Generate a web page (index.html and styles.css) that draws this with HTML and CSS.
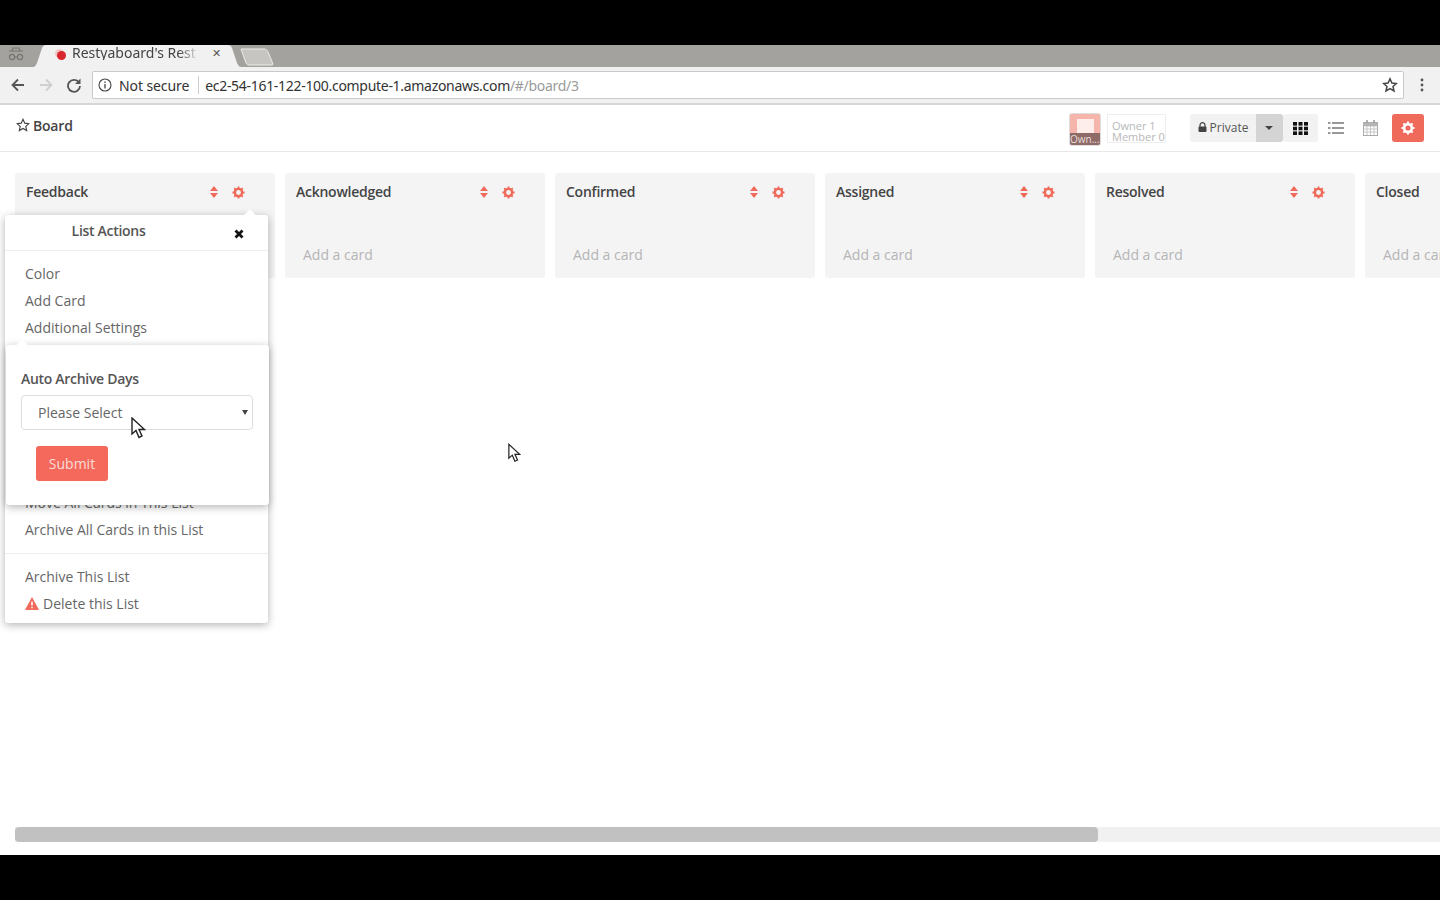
FILE: index.html
```html
<!DOCTYPE html>
<html>
<head>
  <meta charset="UTF-8">
  <title>Restyaboard</title>
  <link rel="stylesheet" href="styles.css">
</head>
<body>
  <div class="black-bar"></div>

  <!-- browser tabs -->
  <div class="tabstrip">
    <svg class="incognito" width="18" height="16" viewBox="0 0 18 16"><path d="M2 4h14M5 4l1-3h6l1 3" fill="none" stroke="#77756f" stroke-width="1.2"/><circle cx="5" cy="10" r="2.6" fill="none" stroke="#77756f" stroke-width="1.2"/><circle cx="13" cy="10" r="2.6" fill="none" stroke="#77756f" stroke-width="1.2"/><path d="M7.6 10h2.8" stroke="#77756f"/></svg>
    <div class="tab">
      <svg class="tab-shape" width="208" height="22" viewBox="0 0 208 22"><path d="M0 22C2 22 3 20 4 18L9 3C10 1 11 0 13 0H195C197 0 198 1 199 3L204 18C205 20 206 22 208 22Z" fill="#f1f1f1"/></svg>
      <span class="favicon"></span>
      <span class="tab-title">Restyaboard's Rest</span>
      <span class="tab-close">✕</span>
    </div>
    <svg class="new-tab" width="36" height="18" viewBox="0 0 36 18"><path d="M1 1H24C26 1 27 2 28 4L33 16C33 17 32 17 31 17H9C7 17 7 16 6 15L1 1Z" fill="#c6c5c1" stroke="#eeeeec"/></svg>
  </div>

  <!-- browser toolbar -->
  <div class="toolbar">
    <svg class="nav-icon" width="16" height="16" viewBox="0 0 16 16"><path d="M14 8H3M8 2.5L2.5 8 8 13.5" fill="none" stroke="#555" stroke-width="1.8"/></svg>
    <svg class="nav-icon" width="16" height="16" viewBox="0 0 16 16"><path d="M2 8h11M8 2.5L13.5 8 8 13.5" fill="none" stroke="#cfcfcf" stroke-width="1.8"/></svg>
    <svg class="nav-icon" width="16" height="16" viewBox="0 0 16 16"><path d="M13 5.5A6 6 0 1 0 14 9" fill="none" stroke="#555" stroke-width="1.8"/><path d="M14.5 1.5V7H9z" fill="#555"/></svg>
    <div class="omnibox">
      <svg width="14" height="14" viewBox="0 0 14 14"><circle cx="7" cy="7" r="6" fill="none" stroke="#444" stroke-width="1.1"/><path d="M7 6v4.400M7 3.500v1.400" stroke="#444" stroke-width="1.3"/></svg>
      <span class="secure">Not secure</span>
      <span class="omni-sep"></span>
      <span class="url">ec2-54-161-122-100.compute-1.amazonaws.com<span class="url-path">/#/board/3</span></span>
      <svg class="omni-star" width="16" height="16" viewBox="0 0 16 16"><path d="M8 1.800l1.900 4.200 4.500.5-3.400 3 1 4.500L8 11.700 4 14l1-4.500-3.400-3 4.500-.5z" fill="none" stroke="#444" stroke-width="1.500"/></svg>
    </div>
    <svg class="menu-dots" width="4" height="14" viewBox="0 0 4 14"><circle cx="2" cy="2" r="1.400" fill="#555"/><circle cx="2" cy="7" r="1.400" fill="#555"/><circle cx="2" cy="12" r="1.400" fill="#555"/></svg>
  </div>

  <div class="page">
    <div class="board-header">
      <div class="board-name">
        <svg width="14" height="14" viewBox="0 0 16 16"><path d="M8 1.500l2 4.400 4.700.5-3.500 3.200 1 4.700L8 11.900l-4.200 2.400 1-4.700L1.300 6.400 6 5.900z" fill="none" stroke="#444" stroke-width="1.300"/></svg>
        <span>Board</span>
      </div>
      <div class="board-tools">
        <div class="avatar"><span class="avatar-label">Own...</span></div>
        <div class="counts"><span>Owner 1</span><span>Member 0</span></div>
        <div class="privacy">
          <span class="privacy-label">
            <svg width="9" height="10" viewBox="0 0 9 10"><path d="M2 5V3.200a2.500 2.500 0 0 1 5 0V5" fill="none" stroke="#444" stroke-width="1.200"/><rect x="0.500" y="4.500" width="8" height="5.500" rx="1" fill="#444"/></svg>
            Private
          </span>
          <span class="privacy-caret"></span>
        </div>
        <div class="view-btn view-btn-active">
          <svg width="15" height="13" viewBox="0 0 15 13" fill="#111"><rect width="4" height="3.600"/><rect x="5.500" width="4" height="3.600"/><rect x="11" width="4" height="3.600"/><rect y="4.700" width="4" height="3.600"/><rect x="5.500" y="4.700" width="4" height="3.600"/><rect x="11" y="4.700" width="4" height="3.600"/><rect y="9.400" width="4" height="3.600"/><rect x="5.500" y="9.400" width="4" height="3.600"/><rect x="11" y="9.400" width="4" height="3.600"/></svg>
        </div>
        <div class="view-btn">
          <svg width="16" height="12" viewBox="0 0 16 12" fill="#999"><rect width="2.500" height="2"/><rect x="4" width="12" height="2"/><rect y="5" width="2.500" height="2"/><rect x="4" y="5" width="12" height="2"/><rect y="10" width="2.500" height="2"/><rect x="4" y="10" width="12" height="2"/></svg>
        </div>
        <div class="view-btn">
          <svg width="15" height="16" viewBox="0 0 15 16"><rect x="0.500" y="2.500" width="14" height="13" fill="none" stroke="#aaa"/><path d="M0.500 6h14M0.500 9h14M0.500 12h14M4 6v9M7.500 6v9M11 6v9" stroke="#bbb" stroke-width="0.800"/><path d="M0.500 2.500h14V6H.5z" fill="#b5b5b5"/><path d="M4 0v3M11 0v3" stroke="#999" stroke-width="1.500"/></svg>
        </div>
        <div class="settings-btn">
          <svg class="gear" width="14" height="14" viewBox="0 0 14 14"><circle cx="7" cy="7" r="3.900" fill="none" stroke="#fff" stroke-width="2.600"/><path d="M7 0.500v2.500M7 11v2.500M0.500 7H3M11 7h2.500M2.400 2.400l1.800 1.800M9.800 9.800l1.800 1.800M2.400 11.600l1.800-1.800M9.800 4.200l1.800-1.800" stroke="#fff" stroke-width="2"/></svg>
        </div>
      </div>
    </div>

    <div class="lists">
      <div class="list">
        <div class="list-head"><span class="list-title">Feedback</span><span class="sort-icon"></span><svg class="gear" width="13" height="13" viewBox="0 0 14 14"><circle cx="7" cy="7" r="3.900" fill="none" stroke="#ef6a5a" stroke-width="2.600"/><path d="M7 0.500v2.500M7 11v2.500M0.500 7H3M11 7h2.500M2.400 2.400l1.800 1.800M9.800 9.800l1.800 1.800M2.400 11.600l1.800-1.800M9.800 4.200l1.800-1.800" stroke="#ef6a5a" stroke-width="2"/></svg></div>
        <div class="add-card">Add a card</div>
      </div>
      <div class="list">
        <div class="list-head"><span class="list-title">Acknowledged</span><span class="sort-icon"></span><svg class="gear" width="13" height="13" viewBox="0 0 14 14"><circle cx="7" cy="7" r="3.900" fill="none" stroke="#ef6a5a" stroke-width="2.600"/><path d="M7 0.500v2.500M7 11v2.500M0.500 7H3M11 7h2.500M2.400 2.400l1.800 1.800M9.800 9.800l1.800 1.800M2.400 11.600l1.800-1.800M9.800 4.200l1.800-1.800" stroke="#ef6a5a" stroke-width="2"/></svg></div>
        <div class="add-card">Add a card</div>
      </div>
      <div class="list">
        <div class="list-head"><span class="list-title">Confirmed</span><span class="sort-icon"></span><svg class="gear" width="13" height="13" viewBox="0 0 14 14"><circle cx="7" cy="7" r="3.900" fill="none" stroke="#ef6a5a" stroke-width="2.600"/><path d="M7 0.500v2.500M7 11v2.500M0.500 7H3M11 7h2.500M2.400 2.400l1.800 1.800M9.800 9.800l1.800 1.800M2.400 11.600l1.800-1.800M9.800 4.200l1.800-1.800" stroke="#ef6a5a" stroke-width="2"/></svg></div>
        <div class="add-card">Add a card</div>
      </div>
      <div class="list">
        <div class="list-head"><span class="list-title">Assigned</span><span class="sort-icon"></span><svg class="gear" width="13" height="13" viewBox="0 0 14 14"><circle cx="7" cy="7" r="3.900" fill="none" stroke="#ef6a5a" stroke-width="2.600"/><path d="M7 0.500v2.500M7 11v2.500M0.500 7H3M11 7h2.500M2.400 2.400l1.800 1.800M9.800 9.800l1.800 1.800M2.400 11.600l1.800-1.800M9.800 4.200l1.800-1.800" stroke="#ef6a5a" stroke-width="2"/></svg></div>
        <div class="add-card">Add a card</div>
      </div>
      <div class="list">
        <div class="list-head"><span class="list-title">Resolved</span><span class="sort-icon"></span><svg class="gear" width="13" height="13" viewBox="0 0 14 14"><circle cx="7" cy="7" r="3.900" fill="none" stroke="#ef6a5a" stroke-width="2.600"/><path d="M7 0.500v2.500M7 11v2.500M0.500 7H3M11 7h2.500M2.400 2.400l1.800 1.800M9.800 9.800l1.800 1.800M2.400 11.600l1.800-1.800M9.800 4.200l1.800-1.800" stroke="#ef6a5a" stroke-width="2"/></svg></div>
        <div class="add-card">Add a card</div>
      </div>
      <div class="list">
        <div class="list-head"><span class="list-title">Closed</span></div>
        <div class="add-card">Add a card</div>
      </div>
    </div>

    <div class="scrollbar"><div class="scroll-thumb"></div></div>
  </div>

  <div class="black-bar-bottom"></div>

  <!-- list actions dropdown -->
  <div class="popup actions-popup">
    <div class="popup-head">
      <span class="popup-title">List Actions</span>
      <svg class="popup-close" width="10" height="10" viewBox="0 0 10 10"><path d="M1.500 1.500l7 7M8.500 1.500l-7 7" stroke="#111" stroke-width="2.800"/></svg>
    </div>
    <ul class="menu menu-top">
      <li>Color</li>
      <li>Add Card</li>
      <li>Additional Settings</li>
    </ul>
    <ul class="menu menu-hidden">
      <li>Move All Cards in This List</li>
      <li>Archive All Cards in this List</li>
    </ul>
    <ul class="menu menu-last">
      <li>Archive This List</li>
      <li class="menu-danger">
        <svg width="14" height="13" viewBox="0 0 14 13"><path d="M7 0L14 13H0z" fill="#ef6a5a"/><path d="M7 4.500v4M7 9.800v1.500" stroke="#fff" stroke-width="1.500"/></svg>
        Delete this List
      </li>
    </ul>
  </div>

  <!-- additional settings form -->
  <div class="popup settings-popup">
    <label class="field-label">Auto Archive Days</label>
    <div class="select-box">
      <span>Please Select</span>
      <span class="select-arrow"></span>
    </div>
    <button class="submit-btn">Submit</button>
  </div>

  <svg class="cursor cursor-select" width="15" height="22" viewBox="0 0 15 22"><path d="M1 1V17L5 13.500 8 20.500 11 19 8 12.500H13.500Z" fill="#fff" stroke="#222" stroke-width="1.400"/></svg>
  <svg class="cursor cursor-page" width="13" height="20" viewBox="0 0 15 22"><path d="M1 1V17L5 13.500 8 20.500 11 19 8 12.500H13.500Z" fill="#fff" stroke="#222" stroke-width="1.400"/></svg>
</body>
</html>
```

FILE: styles.css
```css
* {
  box-sizing: border-box;
}
body {
  margin: 0;
  height: 900px;
  overflow: hidden;
  display: flex;
  flex-direction: column;
  background: #000;
  font-family: 'Open Sans', sans-serif;
  color: #555;
}
.black-bar {
  height: 45px;
  flex: none;
}
.black-bar-bottom {
  height: 45px;
  flex: none;
}

/* browser chrome */
.tabstrip {
  height: 22px;
  flex: none;
  display: flex;
  background: #a3a29e;
  position: relative;
}
.incognito {
  margin: 2px 0 0 7px;
}
.tab {
  position: relative;
  width: 208px;
  height: 22px;
  margin-left: 8px;
  display: flex;
  align-items: flex-start;
  flex: none;
}
.tab-shape {
  position: absolute;
  top: 0;
  left: 0;
}
.favicon {
  position: relative;
  width: 9px;
  height: 9px;
  margin: 6px 0 0 24px;
  border-radius: 50%;
  background: #d9262c;
  box-shadow: -2px -2px 0 #f3c4c4;
}
.tab-title {
  position: relative;
  margin: 0 0 0 6px;
  width: 130px;
  line-height: 15px;
  overflow: hidden;
  white-space: nowrap;
  font-family: 'Noto Sans', sans-serif;
  font-size: 14px;
  color: #444;
  -webkit-mask-image: linear-gradient(to right, #000 82%, transparent 98%);
}
.tab-close {
  position: relative;
  margin: 0 0 0 10px;
  line-height: 15px;
  font-size: 11px;
  color: #555;
}
.new-tab {
  margin: 3px 0 0 -1px;
}
.toolbar {
  height: 38px;
  flex: none;
  display: flex;
  align-items: center;
  background: #f1f1f1;
  border-bottom: 2px solid #d6d6d6;
  padding: 0 0 0 10px;
}
.nav-icon {
  margin-right: 12px;
  flex: none;
}
.omnibox {
  width: 1312px;
  height: 28px;
  margin-left: -2px;
  flex: none;
  display: flex;
  align-items: center;
  background: #fff;
  border: 1px solid #c9c9c9;
  border-radius: 2px;
  padding: 0 5px;
  font-family: 'Noto Sans', sans-serif;
  font-size: 14px;
  color: #333;
}
.secure {
  margin-left: 7px;
  letter-spacing: -0.1px;
}
.omni-sep {
  width: 1px;
  height: 18px;
  margin: 0 6px 0 9px;
  background: #ccc;
}
.url {
  flex: 1;
  letter-spacing: -0.3px;
}
.url-path {
  color: #9a9a9a;
}
.menu-dots {
  margin-left: 16px;
}

/* board */
.page {
  flex: 1;
  min-height: 0;
  background: #fff;
  display: flex;
  flex-direction: column;
}
.board-header {
  height: 47px;
  flex: none;
  display: flex;
  align-items: center;
  justify-content: space-between;
  border-bottom: 1px solid #e8e8e8;
  padding: 0 16px 0 16px;
}
.board-name {
  display: flex;
  align-items: center;
  gap: 3px;
  font-size: 14px;
  font-weight: 600;
  letter-spacing: -0.2px;
  color: #444;
  margin-top: -6px;
}
.board-tools {
  display: flex;
  align-items: center;
}
.avatar {
  position: relative;
  width: 32px;
  height: 33px;
  margin-top: 2px;
  background: #f6b5ab;
  border: 1px solid #ddd;
  border-radius: 3px;
  overflow: hidden;
}
.avatar:before {
  content: "";
  position: absolute;
  top: 5px;
  left: 7px;
  width: 17px;
  height: 15px;
  background: #fdeeeb;
}
.avatar-label {
  position: absolute;
  left: 0;
  right: 0;
  bottom: 0;
  height: 12px;
  background: #8f6b68;
  color: #e8dcdc;
  font-size: 10px;
  line-height: 12px;
  white-space: nowrap;
  overflow: hidden;
}
.counts {
  width: 59px;
  height: 29px;
  margin-left: 6px;
  border: 1px solid #eee;
  display: flex;
  flex-direction: column;
  padding-left: 4px;
  font-size: 11px;
  line-height: 11px;
  padding-top: 5px;
  color: #b8b8b8;
  white-space: nowrap;
  overflow: hidden;
}
.privacy {
  display: flex;
  height: 28px;
  margin-left: 24px;
  background: #f2f2f2;
  border-radius: 3px;
  overflow: hidden;
}
.privacy-label {
  width: 66px;
  display: flex;
  align-items: center;
  justify-content: center;
  gap: 3px;
  padding-bottom: 2px;
  font-size: 12px;
  color: #555;
}
.privacy-caret {
  width: 27px;
  background: #d4d4d4;
  position: relative;
}
.privacy-caret:after {
  content: "";
  position: absolute;
  top: 12px;
  left: 9px;
  border: 4px solid transparent;
  border-top: 4px solid #444;
}
.view-btn {
  width: 35px;
  height: 28px;
  display: flex;
  align-items: center;
  justify-content: center;
}
.view-btn-active {
  background: #f2f2f2;
  border-radius: 3px;
}
.settings-btn {
  width: 32px;
  height: 28px;
  margin-left: 4px;
  padding-right: 1px;
  background: #ef6a5a;
  border-radius: 3px;
  display: flex;
  align-items: center;
  justify-content: center;
}
.lists {
  display: flex;
  gap: 10px;
  margin-top: 21px;
  padding-left: 15px;
  overflow: hidden;
  flex: none;
}
.list {
  width: 260px;
  height: 105px;
  flex: none;
  background: #f4f4f5;
  border-radius: 3px;
  padding: 0 11px;
}
.list-head {
  height: 38px;
  display: flex;
  align-items: center;
}
.list-title {
  flex: 1;
  margin-top: -2px;
  font-size: 14px;
  font-weight: 600;
  color: #444;
  letter-spacing: -0.25px;
}
.sort-icon {
  position: relative;
  width: 8px;
  height: 12px;
  margin-right: 14px;
}
.sort-icon:before, .sort-icon:after {
  content: "";
  position: absolute;
  left: 0;
  border-left: 4px solid transparent;
  border-right: 4px solid transparent;
}
.sort-icon:before {
  top: 0;
  border-bottom: 5px solid #ef6a5a;
}
.sort-icon:after {
  bottom: 0;
  border-top: 5px solid #ef6a5a;
}
.list-head .gear {
  margin-right: 19px;
}
.add-card {
  margin: 34px 0 0 7px;
  font-size: 14px;
  color: #b5b5b5;
  white-space: nowrap;
}
.scrollbar {
  height: 15px;
  flex: none;
  margin-top: auto;
  margin-bottom: 13px;
  margin-left: 15px;
  background: #f1f1f1;
}
.scroll-thumb {
  width: 1083px;
  height: 15px;
  background: #c1c1c1;
  border-radius: 4px;
}

/* popups, laid over the board */
.popup {
  position: absolute;
  background: #fff;
  border-radius: 3px;
  box-shadow: 0 2px 8px rgba(0, 0, 0, 0.3);
}
.popup:before {
  content: "";
  position: absolute;
  top: -4px;
  width: 8px;
  height: 8px;
  background: #fff;
  transform: rotate(45deg);
}
.actions-popup {
  top: 215px;
  left: 5px;
  width: 263px;
  height: 408px;
}
.actions-popup:before {
  left: 241px;
}
.popup-head {
  position: relative;
  height: 36px;
  border-bottom: 1px solid #eee;
  text-align: center;
  padding: 6px 56px 0 0;
  font-size: 14px;
  color: #555;
  font-weight: 600;
  letter-spacing: -0.3px;
}
.popup-close {
  position: absolute;
  top: 14px;
  left: 229px;
}
.menu {
  list-style: none;
  margin: 0;
  padding: 0 20px;
  font-size: 14px;
}
.menu li {
  height: 27px;
  line-height: 27px;
  white-space: nowrap;
  color: #666;
}
.menu-top {
  padding-top: 9px;
}
.menu-hidden {
  margin-top: 148px;
  height: 65px;
  border-bottom: 1px solid #eee;
  padding-top: 0;
}
.menu-last {
  padding-top: 9px;
}
.menu-danger {
  display: flex;
  align-items: center;
  gap: 4px;
}
.settings-popup {
  top: 345px;
  left: 6px;
  width: 263px;
  height: 160px;
  padding: 24px 15px 0;
}
.settings-popup:before {
  left: 12px;
}
.field-label {
  display: block;
  font-size: 14px;
  font-weight: 600;
  letter-spacing: -0.3px;
  color: #555;
}
.select-box {
  position: relative;
  height: 35px;
  margin-top: 7px;
  border: 1px solid #ddd;
  border-radius: 4px;
  font-size: 14px;
  line-height: 33px;
  padding-left: 16px;
  color: #666;
  width: 232px;
}
.select-arrow {
  position: absolute;
  top: 14px;
  right: 4px;
  border: 3.5px solid transparent;
  border-top: 5px solid #444;
}
.submit-btn {
  display: block;
  width: 72px;
  height: 35px;
  margin: 16px 0 0 15px;
  border: none;
  border-radius: 3px;
  background: #f4695c;
  color: #fbdcd8;
  font-family: 'Open Sans', sans-serif;
  font-size: 14px;
}
.cursor {
  position: absolute;
}
.cursor-select {
  top: 417px;
  left: 131px;
}
.cursor-page {
  top: 443px;
  left: 508px;
}
```
